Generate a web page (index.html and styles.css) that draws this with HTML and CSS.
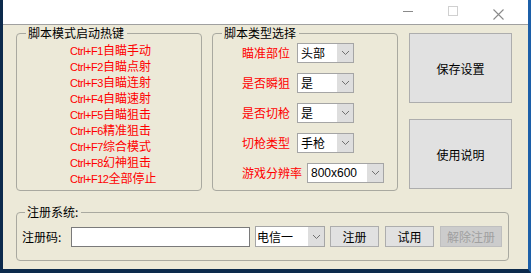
FILE: index.html
```html
<!DOCTYPE html>

<html>
    <head>
        <meta charset="utf-8">

        <link rel="stylesheet" href="styles.css">
    </head>

    <body>
        <div class="window">
            <div class="titlebar">
                <span class="tb-btn min"></span>
                <span class="tb-btn max"></span>
                <span class="tb-btn close">
                    <svg width="11" height="11" viewBox="0 0 11 11">
                        <path d="M0.5 0.5 L10.5 10.5 M10.5 0.5 L0.5 10.5" stroke="#8a8a8a" stroke-width="1.1" fill="none"/>
                    </svg>
                </span>
            </div>

            <div class="content">
                <div class="top-row">
                    <fieldset class="group hotkeys">
                        <legend>脚本模式启动热键</legend>

                        <div class="inner">
                            <div class="hk"><span class="key">Ctrl+F1</span>自瞄手动</div>
                            <div class="hk"><span class="key">Ctrl+F2</span>自瞄点射</div>
                            <div class="hk"><span class="key">Ctrl+F3</span>自瞄连射</div>
                            <div class="hk"><span class="key">Ctrl+F4</span>自瞄速射</div>
                            <div class="hk"><span class="key">Ctrl+F5</span>自瞄狙击</div>
                            <div class="hk"><span class="key">Ctrl+F6</span>精准狙击</div>
                            <div class="hk"><span class="key">Ctrl+F7</span>综合模式</div>
                            <div class="hk"><span class="key">Ctrl+F8</span>幻神狙击</div>
                            <div class="hk"><span class="key">Ctrl+F12</span>全部停止</div>
                        </div>
                    </fieldset>

                    <fieldset class="group types">
                        <legend>脚本类型选择</legend>

                        <div class="inner">
                            <div class="opt">
                                <span class="lbl">瞄准部位</span>
                                <div class="combo small"><span class="val">头部</span><span class="drop"><svg width="7" height="4" viewBox="0 0 7 4"><path d="M0 0 L3.5 3.5 L7 0" stroke="#707070" fill="none"/></svg></span></div>
                            </div>

                            <div class="opt">
                                <span class="lbl">是否瞬狙</span>
                                <div class="combo small"><span class="val">是</span><span class="drop"><svg width="7" height="4" viewBox="0 0 7 4"><path d="M0 0 L3.5 3.5 L7 0" stroke="#707070" fill="none"/></svg></span></div>
                            </div>

                            <div class="opt">
                                <span class="lbl">是否切枪</span>
                                <div class="combo small"><span class="val">是</span><span class="drop"><svg width="7" height="4" viewBox="0 0 7 4"><path d="M0 0 L3.5 3.5 L7 0" stroke="#707070" fill="none"/></svg></span></div>
                            </div>

                            <div class="opt">
                                <span class="lbl">切枪类型</span>
                                <div class="combo small"><span class="val">手枪</span><span class="drop"><svg width="7" height="4" viewBox="0 0 7 4"><path d="M0 0 L3.5 3.5 L7 0" stroke="#707070" fill="none"/></svg></span></div>
                            </div>

                            <div class="opt last">
                                <span class="lbl">游戏分辨率</span>
                                <div class="combo wide"><span class="val">800x600</span><span class="drop"><svg width="7" height="4" viewBox="0 0 7 4"><path d="M0 0 L3.5 3.5 L7 0" stroke="#707070" fill="none"/></svg></span></div>
                            </div>
                        </div>
                    </fieldset>

                    <div class="side">
                        <button class="big-btn">保存设置</button>
                        <button class="big-btn">使用说明</button>
                    </div>
                </div>

                <fieldset class="group reg">
                    <legend>注册系统:</legend>

                    <div class="reg-row">
                        <span class="reg-lbl">注册码:</span>
                        <div class="code-box"></div>
                        <div class="combo line"><span class="val">电信一</span><span class="drop"><svg width="7" height="4" viewBox="0 0 7 4"><path d="M0 0 L3.5 3.5 L7 0" stroke="#707070" fill="none"/></svg></span></div>
                        <button class="btn">注册</button>
                        <button class="btn">试用</button>
                        <button class="btn off">解除注册</button>
                    </div>
                </fieldset>
            </div>
        </div>
    </body>
</html>
```

FILE: styles.css
```css
body
{
    margin: 0;
    font-family: "Noto Sans CJK SC", sans-serif;
    font-size: 12px;
    color: black;
}

.window
{
    width: 525px;
    height: 269px;
    border-left: 3px solid #0c2a4c;
    border-right: 3px solid #1c5fa8;
    border-bottom: 4px solid #0c2a4c;
    background-color: #ece9d8;
}

.titlebar
{
    height: 24px;
    background-color: white;
    border-bottom: 1px solid #a0a0a0;
    position: relative;
}

.tb-btn
{
    position: absolute;
    display: block;
    top: 6px;
}

.min
{
    left: 400px;
    top: 11px;
    width: 10px;
    height: 1px;
    background-color: #8a8a8a;
}

.max
{
    left: 445px;
    width: 8px;
    height: 8px;
    border: 1px solid #d0d0d0;
}

.close
{
    left: 490px;
    height: 11px;
}

.content
{
    padding: 1px 0 0 13px;
}

.top-row
{
    display: flex;
    align-items: flex-start;
}

.group
{
    margin: 0;
    padding: 0;
    border: 1px solid #a9a9a0;
    border-radius: 4px;
    line-height: 14px;
    box-sizing: border-box;
}

.group legend
{
    margin-left: 9px;
    padding: 0 3px 0 2px;
    line-height: 14px;
}

.hotkeys
{
    width: 186px;
    height: 165px;
}

.hotkeys .inner
{
    padding: 2px 0 0 53px;
}

.hk
{
    color: #ff0000;
    line-height: 16px;
    height: 16px;
}

.key
{
    font-family: "Liberation Sans", sans-serif;
    font-size: 11px;
    letter-spacing: -0.5px;
}

.types
{
    width: 186px;
    height: 165px;
    margin-left: 10px;
}

.types .inner
{
    padding: 3px 0 0 29px;
}

.opt
{
    display: flex;
    align-items: center;
    height: 20px;
    margin-bottom: 10px;
}

.opt.last
{
    margin-bottom: 0;
}

.lbl
{
    color: #ff0000;
    width: 55px;
}

.opt.last .lbl
{
    width: 65px;
}

.combo
{
    display: flex;
    height: 18px;
    border: 1px solid #a5a5a5;
    background-color: white;
}

.combo .val
{
    flex: 1;
    padding-left: 3px;
    line-height: 18px;
    font-size: 12px;
}

.combo .drop
{
    width: 16px;
    background-color: #dedede;
    display: flex;
    align-items: center;
    justify-content: center;
}

.small
{
    width: 55px;
}

.wide
{
    width: 75px;
}

.wide .val
{
    font-family: "Liberation Sans", sans-serif;
}

.side
{
    display: flex;
    flex-direction: column;
    margin-left: 11px;
    padding-top: 7px;
}

.big-btn
{
    width: 103px;
    height: 70px;
    background-color: #e1e1e1;
    border: 1px solid #adadad;
    font-family: "Noto Sans CJK SC", sans-serif;
    font-size: 12px;
    padding: 0;
}

.big-btn + .big-btn
{
    margin-top: 16px;
}

.reg
{
    width: 493px;
    height: 56px;
    margin-top: 14px;
}

.reg legend
{
    margin-left: 8px;
}

.reg-row
{
    display: flex;
    align-items: center;
    height: 21px;
    padding: 7px 0 0 5px;
}

.reg-lbl
{
    width: 49px;
}

.code-box
{
    width: 177px;
    height: 18px;
    background-color: white;
    border: 1px solid #7a7a7a;
}

.line
{
    width: 68px;
    margin-left: 5px;
    height: 19px;
}

.line .val
{
    line-height: 19px;
    padding-left: 1px;
}

.btn
{
    height: 21px;
    width: 49px;
    margin-left: 5px;
    padding: 0;
    background-color: #e1e1e1;
    border: 1px solid #adadad;
    font-family: "Noto Sans CJK SC", sans-serif;
    font-size: 12px;
}

.btn + .btn
{
    margin-left: 6px;
}

.btn.off
{
    width: 62px;
    color: #a0a0a0;
    background-color: #cccccc;
    border-color: #bfbfbf;
}
```
